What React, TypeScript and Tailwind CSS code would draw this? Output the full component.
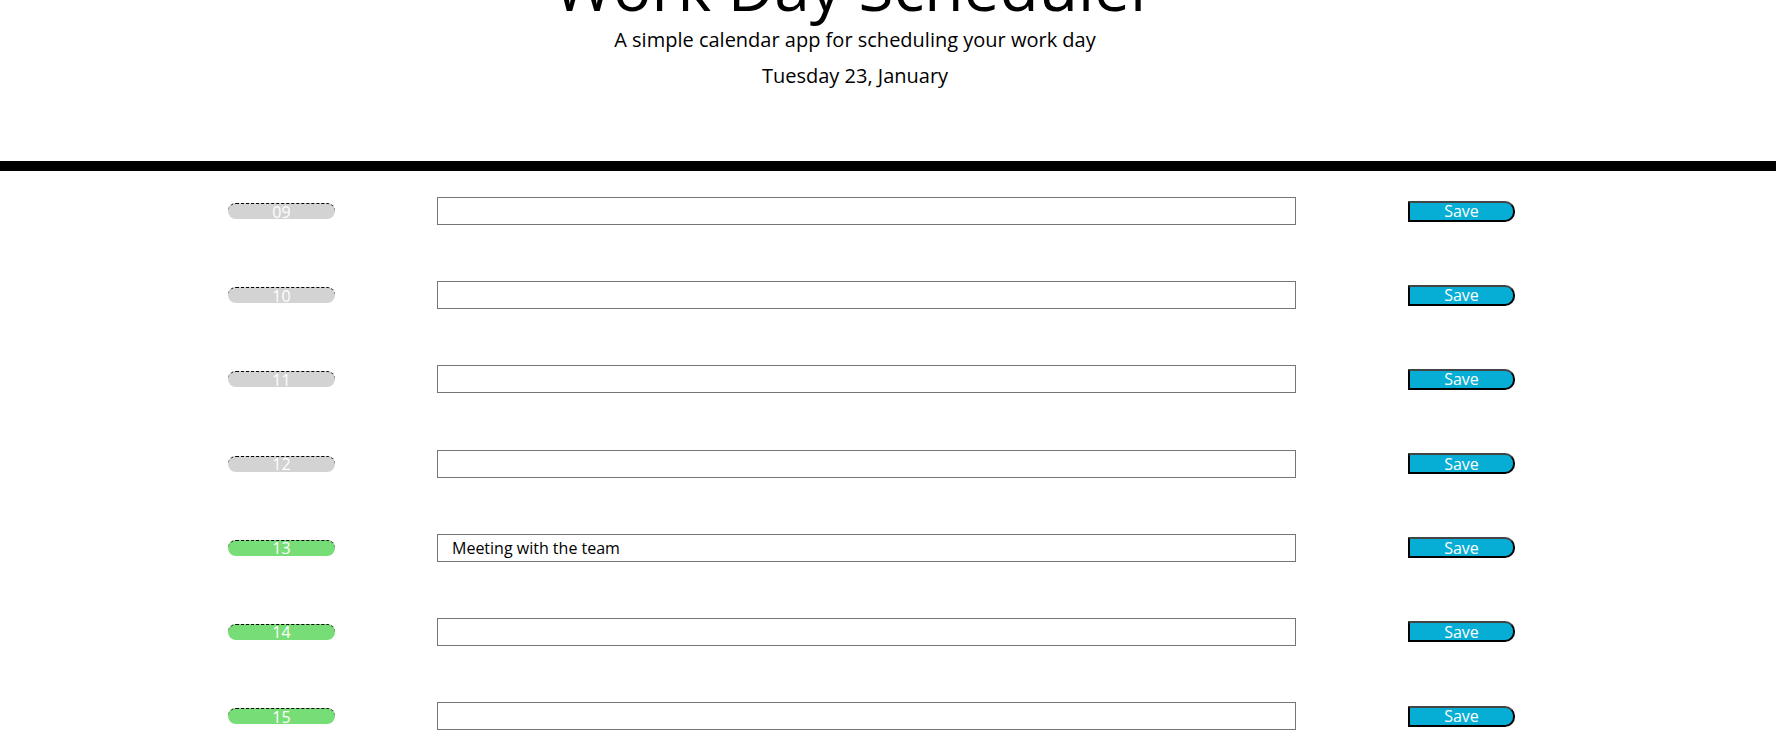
const hours = [
    { label: '09', past: true, text: '' },
    { label: '10', past: true, text: '' },
    { label: '11', past: true, text: '' },
    { label: '12', past: true, text: '' },
    { label: '13', past: false, text: 'Meeting with the team' },
    { label: '14', past: false, text: '' },
    { label: '15', past: false, text: '' },
];

function HourRow({ label, past, text }: { label: string; past: boolean; text: string }) {
    return (
        <div className="mb-[56.2px] flex h-[28px] items-center pl-[228px]">
            <div
                className={`flex h-[16px] w-[107px] items-center justify-center rounded-[8px] border-t border-dashed border-black text-[16px] text-white ${
                    past ? 'bg-[#d3d3d3]' : 'bg-[#77dd77]'
                }`}
            >
                {label}
            </div>
            <input
                type="text"
                defaultValue={text}
                className="ml-[102px] h-[28px] w-[859px] border border-[#767676] bg-white px-[14px] text-[16px] text-black outline-none"
            />
            <button
                type="button"
                className="ml-[112px] flex h-[21px] w-[107px] items-center justify-center rounded-r-[10px] border-2 border-black border-t-[#444] bg-[#06aed5] text-[16px] leading-none text-white"
            >
                Save
            </button>
        </div>
    );
}

export default function App() {
    return (
        <div className="h-[742px] overflow-hidden bg-white font-['Open_Sans',sans-serif] text-black">
            <header className="-mt-[52px] pr-[66px] text-center">
                <h1 className="text-[64px] leading-[77px] font-normal">Work Day Scheduler</h1>
                <p className="text-[20px] leading-[30px]">A simple calendar app for scheduling your work day</p>
                <p className="mt-[6px] text-[20px] leading-[30px]">Tuesday 23, January</p>
            </header>
            <div className="mt-[70px] h-[10px] bg-black" />
            <main className="pt-[26px]">
                {hours.map((h) => (
                    <HourRow key={h.label} {...h} />
                ))}
            </main>
        </div>
    );
}
